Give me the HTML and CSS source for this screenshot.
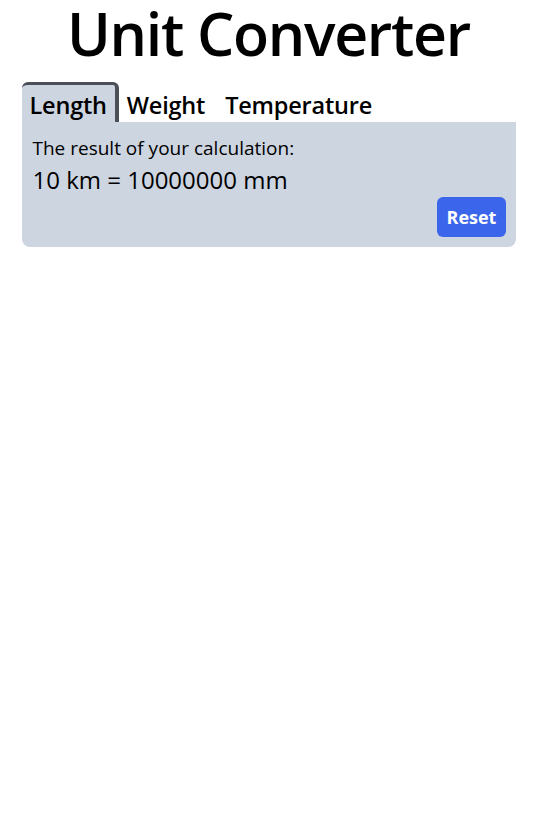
FILE: index.html
```html
<!DOCTYPE html>
<html lang="en">
<head>
<meta charset="utf-8">
<title>Unit Converter</title>
<link rel="stylesheet" href="styles.css">
</head>
<body>
<main class="app">
  <h1 class="title">Unit Converter</h1>
  <div class="tabs">
    <button class="tab active">Length</button>
    <button class="tab">Weight</button>
    <button class="tab">Temperature</button>
  </div>
  <section class="panel">
    <p class="label">The result of your calculation:</p>
    <p class="result">10 km = 10000000 mm</p>
    <div class="actions">
      <button class="reset">Reset</button>
    </div>
  </section>
</main>
</body>
</html>
```
FILE: styles.css
```css
* { box-sizing: border-box; }
html, body { margin: 0; padding: 0; background: #fff; }
body {
  font-family: "Open Sans", "Noto Sans", sans-serif;
  color: #000;
}
.app {
  width: 494px;
  margin: 0 auto;
}
.title {
  margin: 0;
  font-size: 59px;
  line-height: 66px;
  font-weight: 600;
  text-align: center;
  letter-spacing: -1.3px;
}
.tabs {
  display: flex;
  margin-top: 16px;
}
.tab {
  font-family: inherit;
  font-size: 23.5px;
  font-weight: 600;
  line-height: 32px;
  color: #000;
  background: transparent;
  border: 0;
  border-top: 3px solid transparent;
  border-right: 4px solid transparent;
  border-radius: 6px 6px 0 0;
  padding: 4px 8px 1px 8px;
  letter-spacing: -0.2px;
  cursor: pointer;
}
.tab.active {
  background: #cdd5e1;
  border-top-color: #4b4f57;
  border-right-color: #4b4f57;
}
.panel {
  background: #cdd5e1;
  border-radius: 0 0 8px 8px;
  padding: 10px;
}
.label {
  margin: 3px 0 0 1px;
  font-size: 19px;
  line-height: 26px;
}
.result {
  margin: 2px 0 0 1px;
  font-size: 24px;
  line-height: 34px;
}
.actions {
  display: flex;
  justify-content: flex-end;
}
.reset {
  font-family: inherit;
  font-size: 18px;
  font-weight: 700;
  line-height: 24px;
  color: #fff;
  background: #3b65ea;
  border: 0;
  border-radius: 6px;
  padding: 8px 10px;
  width: 69px;
  height: 40px;
  cursor: pointer;
}
```
